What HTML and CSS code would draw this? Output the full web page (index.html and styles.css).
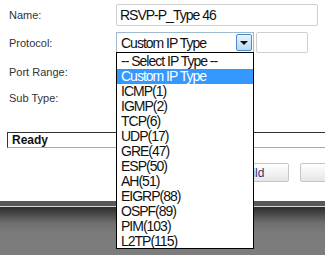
FILE: index.html
```html
<!DOCTYPE html>
<html lang="en">
<head>
    <meta charset="UTF-8">
    <title>Custom Service</title>
    <link rel="stylesheet" href="styles.css">
</head>
<body>
    <div class="page">
        <div class="form">
            <div class="row row-name">
                <label class="label">Name:</label>
                <input type="text" class="text-input name-input" value="RSVP-P_Type 46">
            </div>

            <div class="row row-protocol">
                <label class="label">Protocol:</label>
                <div class="select-wrap">
                    <div class="select-box">
                        <span class="select-value">Custom IP Type</span>
                        <span class="select-arrow"><span class="triangle"></span></span>
                    </div>
                    <!-- open dropdown list -->
                    <ul class="options">
                        <li>-- Select IP Type --</li>
                        <li class="selected">Custom IP Type</li>
                        <li>ICMP(1)</li>
                        <li>IGMP(2)</li>
                        <li>TCP(6)</li>
                        <li>UDP(17)</li>
                        <li>GRE(47)</li>
                        <li>ESP(50)</li>
                        <li>AH(51)</li>
                        <li>EIGRP(88)</li>
                        <li>OSPF(89)</li>
                        <li>PIM(103)</li>
                        <li>L2TP(115)</li>
                    </ul>
                </div>
                <input type="text" class="text-input proto-num">
            </div>

            <div class="row row-plain">
                <label class="label">Port Range:</label>
            </div>

            <div class="row row-plain">
                <label class="label">Sub Type:</label>
            </div>
        </div>

        <div class="status-bar">
            <span class="status-text">Ready</span>
        </div>

        <div class="buttons">
            <button class="btn">Build</button>
            <button class="btn btn-wide"></button>
        </div>

        <div class="footer">
            <div class="footer-band"></div>
            <div class="footer-shade"></div>
        </div>
    </div>
</body>
</html>
```

FILE: styles.css
```css
* {
    margin: 0;
    padding: 0;
    box-sizing: border-box;
}

body {
    font-family: 'Liberation Sans', Arial, sans-serif;
    background: white;
    width: 325px;
    height: 255px;
    overflow: hidden;
}

.page {
    height: 255px;
    display: flex;
    flex-direction: column;
}

.form {
    padding: 4px 0 0 9px;
}

.row {
    display: flex;
    align-items: center;
}

.label {
    width: 107px;
    font-size: 11px;
    color: #333;
}

.row-name {
    height: 22px;
    margin-bottom: 6px;
}

.row-protocol {
    height: 21px;
    position: relative;
    z-index: 2;
}

.row-plain {
    height: 26px;
}

.row-protocol + .row-plain {
    margin-top: 6px;
}

.text-input {
    font-family: 'Liberation Sans', Arial, sans-serif;
    font-size: 14px;
    letter-spacing: -1px;
    color: #111;
    border: 1px solid #cfcfcf;
    border-radius: 2px;
    padding: 0 3px;
    outline: none;
    background: white;
}

.name-input {
    width: 202px;
    height: 22px;
}

.proto-num {
    width: 52px;
    height: 21px;
    margin-left: 2px;
}

.select-wrap {
    position: relative;
    width: 138px;
    height: 21px;
}

.select-box {
    display: flex;
    align-items: center;
    height: 21px;
    border: 1px solid #9fb7cf;
    background: white;
    padding: 1px;
}

.select-value {
    flex: 1;
    font-size: 14px;
    letter-spacing: -1px;
    color: #111;
    padding-left: 3px;
}

.select-arrow {
    width: 16px;
    height: 17px;
    border: 1px solid #4a8bc6;
    border-radius: 2px;
    background: linear-gradient(#e9f3fc, #b9d8f2);
    display: flex;
    align-items: center;
    justify-content: center;
}

.triangle {
    width: 0;
    height: 0;
    border-left: 4px solid transparent;
    border-right: 4px solid transparent;
    border-top: 4px solid #111;
}

.options {
    list-style: none;
    position: absolute;
    top: 20px;
    left: 0;
    width: 138px;
    border: 1px solid #000;
    background: white;
    padding-top: 1px;
    height: 197px;
}

.options li {
    height: 15px;
    line-height: 15px;
    font-size: 14px;
    letter-spacing: -1px;
    color: #111;
    padding-left: 4px;
    white-space: nowrap;
}

.options li.selected {
    background: #3399ff;
    color: white;
}

.status-bar {
    margin: 21px 0 0 7px;
    height: 16px;
    border-top: 1px solid #333;
    border-left: 1px solid #333;
    border-bottom: 1px solid #aaa;
    display: flex;
    align-items: center;
}

.status-text {
    font-size: 12px;
    font-weight: bold;
    color: #111;
    padding-left: 4px;
}

.buttons {
    margin-top: 15px;
    height: 19px;
    display: flex;
    gap: 11px;
    padding-left: 213px;
    overflow: hidden;
}

.btn {
    flex: 0 0 76px;
    height: 19px;
    border: 1px solid #c6c6c6;
    border-radius: 2px;
    background: linear-gradient(#ffffff, #e6e6e6);
    font-family: 'Liberation Sans', Arial, sans-serif;
    font-size: 12px;
    color: #333377;
}

.btn-wide {
    flex-basis: 100px;
}

.footer {
    margin-top: auto;
    height: 54px;
    display: flex;
    flex-direction: column;
}

.footer-band {
    height: 6px;
    background: #585858;
    border-bottom: 1px solid #d8d8d8;
}

.footer-shade {
    flex: 1;
    background: linear-gradient(#2c2c2c 0px, #6e6e6e 16px, #7b7b7b 26px, #7d7d7d);
}
```
